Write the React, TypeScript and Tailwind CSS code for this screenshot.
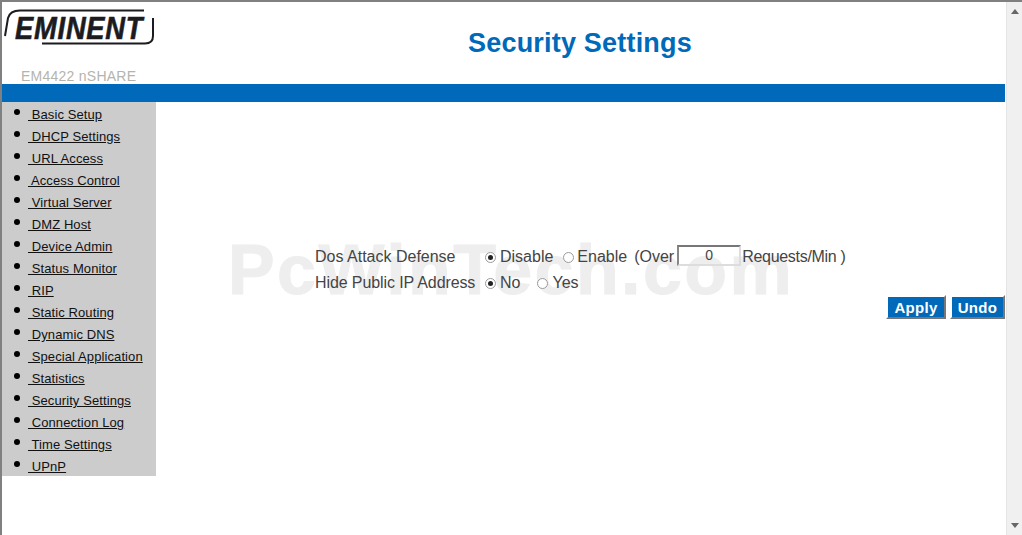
const menu = [
  "Basic Setup",
  "DHCP Settings",
  "URL Access",
  "Access Control",
  "Virtual Server",
  "DMZ Host",
  "Device Admin",
  "Status Monitor",
  "RIP",
  "Static Routing",
  "Dynamic DNS",
  "Special Application",
  "Statistics",
  "Security Settings",
  "Connection Log",
  "Time Settings",
  "UPnP",
];

function Radio({ checked = false }: { checked?: boolean }) {
  return (
    <span className="flex h-[11px] w-[11px] shrink-0 items-center justify-center rounded-full border border-[#9a9a9a] bg-white">
      {checked && <span className="h-[5px] w-[5px] rounded-full bg-[#222]" />}
    </span>
  );
}

function MenuItem({ label }: { label: string }) {
  return (
    <li className="flex h-[22px] items-start">
      <span className="ml-[12px] mt-[7px] h-[6px] w-[6px] rounded-full bg-black" />
      <a className="ml-[8px] mt-[4px] whitespace-pre text-[13px] leading-[17px] tracking-[0.1px] text-[#111] underline">
        {" " + label}
      </a>
    </li>
  );
}

function Logo() {
  return (
    <div className="relative h-[44px] w-[154px]">
      <svg className="absolute left-0 top-0" width="154" height="44" viewBox="2 2 154 44" fill="none">
        <path d="M144 10.5 H20 Q10 10.5 8 18 L5 36" stroke="#1b1b20" strokeWidth="2" />
        <path d="M153 18 V36 Q153 43.5 145 43.5 H42" stroke="#1b1b20" strokeWidth="2" />
      </svg>
      <span className="absolute left-[13px] top-[9px] origin-left scale-x-[0.88] text-[31px] font-bold italic leading-[36px] tracking-[0.9px] text-[#1b1b20] [-webkit-text-stroke:0.6px_#1b1b20]">
        EMINENT
      </span>
    </div>
  );
}

export default function App() {
  return (
    <div className="relative h-[535px] w-[1022px] overflow-hidden border-l-2 border-t-2 border-[#808080] bg-white text-[#444] [font-family:'Liberation_Sans',Arial,sans-serif]">
      <div className="flex h-[533px]">
        <div className="flex w-[1003px] flex-col">
          <header className="flex h-[82px]">
            <div className="w-[154px] shrink-0">
              <Logo />
              <div className="ml-[19px] mt-[22px] text-[14px] leading-[16px] tracking-[0.25px] text-[#b4b4ae]">EM4422 nSHARE</div>
            </div>
            <h1 className="ml-[312px] mt-[25px] text-[27px] font-bold leading-[32px] tracking-[0.2px] text-[#0069b9]">
              Security Settings
            </h1>
          </header>
          <div className="h-[18px] bg-[#0069b9]" />
          <div className="flex">
            <ul className="w-[154px] bg-[#cccccc]">
              {menu.map((m) => (
                <MenuItem key={m} label={m} />
              ))}
            </ul>
            <main className="relative flex-1 pl-[159px] pt-[142px] text-[16px] leading-[18px]">
              <div className="absolute left-[72px] top-[128px] select-none whitespace-nowrap text-[70px] font-bold leading-[80px] tracking-[2.4px] text-[#eeeeee] [-webkit-text-stroke:1px_#eeeeee]">
                PcWinTech.com
              </div>
              <div className="relative">
                <div className="flex h-[26px] items-center">
                  <span className="w-[170px]">Dos Attack Defense</span>
                  <Radio checked />
                  <span className="ml-[4px]">Disable</span>
                  <span className="ml-[10px]"><Radio /></span>
                  <span className="ml-[3px]">Enable</span>
                  <span className="ml-[7px]">(Over</span>
                  <span className="mb-[4px] ml-[3px] flex h-[21px] w-[64px] items-center justify-center border-2 border-b-[#ddd] border-l-[#888] border-r-[#ddd] border-t-[#777] text-[14px]">
                    0
                  </span>
                  <span className="ml-[1px] tracking-[-0.3px]">Requests/Min )</span>
                </div>
                <div className="flex h-[26px] items-center">
                  <span className="w-[170px] tracking-[-0.1px]">Hide Public IP Address</span>
                  <Radio checked />
                  <span className="ml-[4px]">No</span>
                  <span className="ml-[17px]"><Radio /></span>
                  <span className="ml-[4px]">Yes</span>
                </div>
              </div>
              <div className="relative -mt-[1px] flex justify-end gap-[4px]">
                <button className="h-[24px] w-[60px] border-2 border-b-[#777] border-l-white border-r-[#777] border-t-white bg-[#0069b9] text-[15px] font-bold leading-none tracking-[0.3px] text-white">
                  Apply
                </button>
                <button className="h-[24px] w-[55px] border-2 border-b-[#777] border-l-white border-r-[#777] border-t-white bg-[#0069b9] text-[15px] font-bold leading-none tracking-[0.3px] text-white">
                  Undo
                </button>
              </div>
            </main>
          </div>
        </div>
        <div className="ml-[1px] flex w-[16px] flex-col items-center justify-between border-l border-[#e4e4e4] bg-[#f0f0f0] pb-[7px] pt-[7px]">
          <svg width="8" height="5" viewBox="0 0 8 5"><path d="M4 0 L8 5 H0 Z" fill="#666" /></svg>
          <svg width="8" height="5" viewBox="0 0 8 5"><path d="M0 0 H8 L4 5 Z" fill="#666" /></svg>
        </div>
      </div>
    </div>
  );
}
